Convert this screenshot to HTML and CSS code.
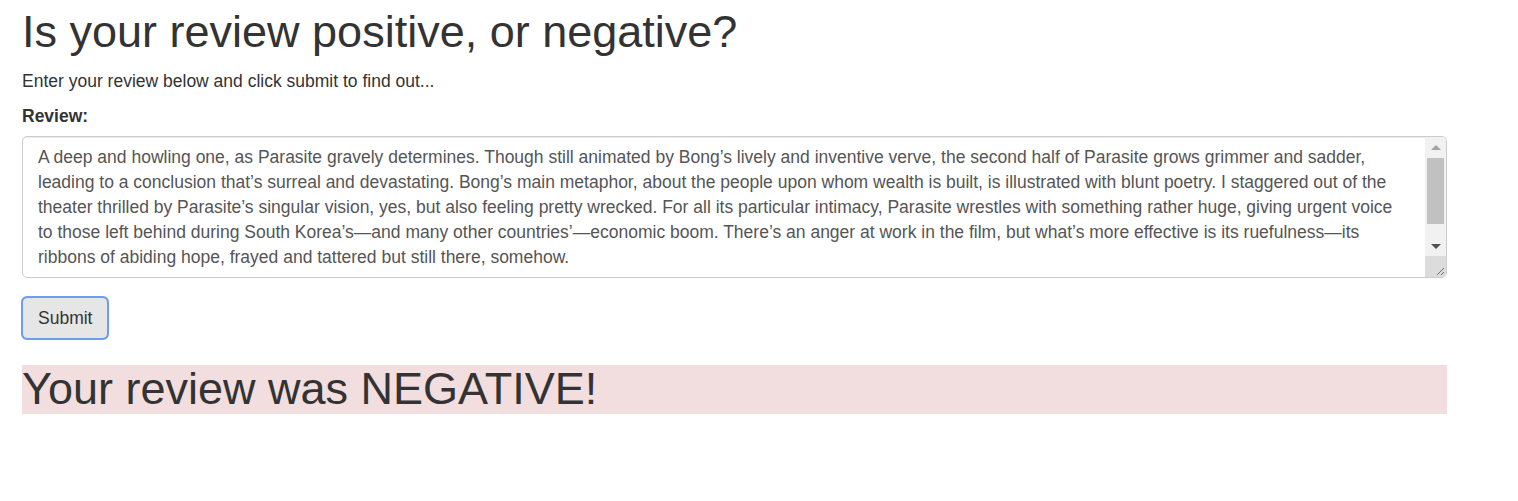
FILE: index.html
```html
<!DOCTYPE html>
<html lang="en">
<head>
<meta charset="utf-8">
<title>Review sentiment</title>
<link rel="stylesheet" href="styles.css">
</head>
<body>
<div class="container">
  <h1 class="title">Is your review positive, or negative?</h1>
  <p class="lead-text">Enter your review below and click submit to find out...</p>
  <form class="review-form">
    <div class="form-group">
      <label class="field-label" for="review">Review:</label>
      <div class="textarea-wrap">
        <textarea id="review" class="form-control" rows="5">A deep and howling one, as Parasite gravely determines. Though still animated by Bong’s lively and inventive verve, the second half of Parasite grows grimmer and sadder, leading to a conclusion that’s surreal and devastating. Bong’s main metaphor, about the people upon whom wealth is built, is illustrated with blunt poetry. I staggered out of the theater thrilled by Parasite’s singular vision, yes, but also feeling pretty wrecked. For all its particular intimacy, Parasite wrestles with something rather huge, giving urgent voice to those left behind during South Korea’s—and many other countries’—economic boom. There’s an anger at work in the film, but what’s more effective is its ruefulness—its ribbons of abiding hope, frayed and tattered but still there, somehow.</textarea>
        <div class="fake-scrollbar" aria-hidden="true">
          <div class="sb-button"><span class="tri tri-up"></span></div>
          <div class="sb-track"><div class="sb-thumb"></div></div>
          <div class="sb-button"><span class="tri tri-down"></span></div>
          <div class="sb-corner">
            <svg width="21" height="21" viewBox="0 0 21 21"><path d="M19 12 L12 19 M19 16 L16 19" stroke="#6f6f6f" stroke-width="1" fill="none"/></svg>
          </div>
        </div>
      </div>
    </div>
    <button type="button" class="btn btn-focused">Submit</button>
  </form>
  <h1 class="result result-negative">Your review was NEGATIVE!</h1>
</div>
</body>
</html>
```

FILE: styles.css
```css
html, body {
  margin: 0;
  padding: 0;
  background: #fff;
}

body {
  font-family: "Liberation Sans", Arial, Helvetica, sans-serif;
  font-size: 17.5px;
  line-height: 25px;
  color: #333;
}

.container {
  width: 1425px;
  padding-left: 22px;
}

.title {
  font-size: 45px;
  font-weight: 400;
  line-height: 49.5px;
  margin: 7px 0 12.5px;
}

.lead-text {
  margin: 0 0 10px;
}

.review-form {
  margin: 0;
}

.form-group {
  margin-bottom: 18.75px;
}

.field-label {
  display: inline-block;
  font-weight: 700;
  margin-bottom: 7.25px;
}

.textarea-wrap {
  position: relative;
}

.form-control {
  display: block;
  box-sizing: border-box;
  width: 100%;
  height: 142px;
  padding: 7.5px 36px 7.5px 15px;
  font-family: "Liberation Sans", Arial, Helvetica, sans-serif;
  font-size: 17.5px;
  line-height: 25px;
  color: #555;
  background: #fff;
  border: 1px solid #ccc;
  border-radius: 5px;
  box-shadow: inset 0 1px 1px rgba(0, 0, 0, 0.075);
  resize: none;
  overflow: hidden;
  margin: 0;
}

.fake-scrollbar {
  position: absolute;
  top: 1px;
  right: 1px;
  bottom: 1px;
  width: 21px;
  display: flex;
  flex-direction: column;
  background: #f1f1f1;
  border-radius: 0 4px 4px 0;
  overflow: hidden;
}

.sb-button {
  height: 20px;
  flex: none;
  display: flex;
  align-items: center;
  justify-content: center;
}

.sb-track {
  flex: 1;
  padding: 1px 2px 0;
}

.sb-thumb {
  height: 66px;
  background: #c1c1c1;
}

.sb-corner {
  height: 21px;
  flex: none;
  background: #dcdcdc;
}

.sb-corner svg {
  display: block;
}

.tri {
  width: 0;
  height: 0;
  border-left: 5px solid transparent;
  border-right: 5px solid transparent;
}

.tri-up {
  border-bottom: 5px solid #a3a3a3;
}

.tri-down {
  border-top: 5px solid #505050;
}

.btn {
  display: inline-block;
  box-sizing: border-box;
  height: 42px;
  padding: 7.5px 15px;
  font-family: "Liberation Sans", Arial, Helvetica, sans-serif;
  font-size: 17.5px;
  line-height: 25px;
  color: #333;
  border-radius: 5px;
  cursor: pointer;
  margin: 0;
}

.btn-focused {
  background: #e6e6e6;
  border: 1px solid #8c8c8c;
  outline: 2px solid #6d9eeb;
  outline-offset: -1px;
}

.result {
  font-size: 45px;
  font-weight: 400;
  line-height: 48.5px;
  margin: 26px 0 0;
}

.result-negative {
  background: #f2dede;
}
```
